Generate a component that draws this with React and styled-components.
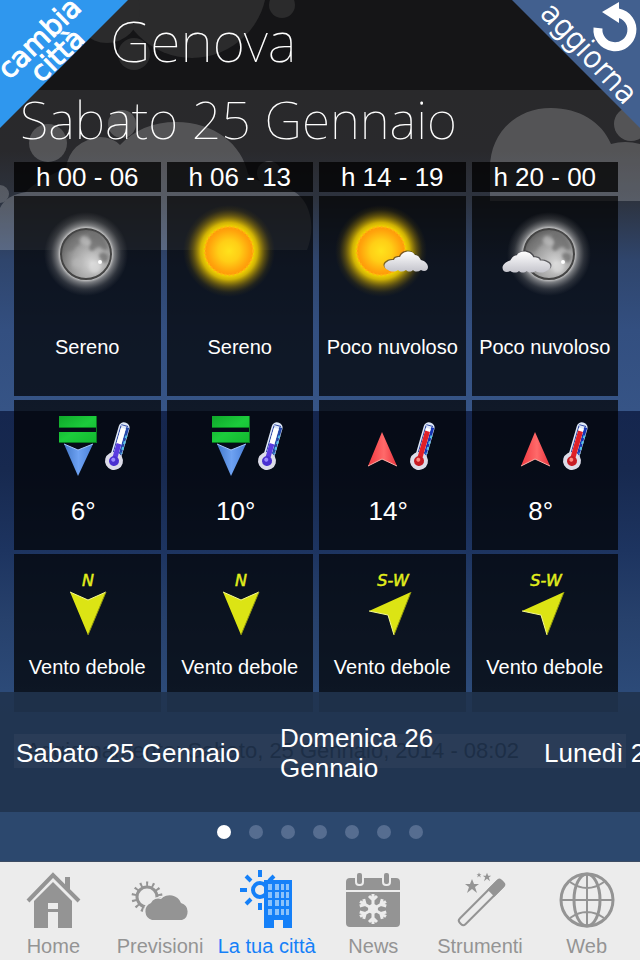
import React from 'react';
import styled, { createGlobalStyle } from 'styled-components';

const GlobalStyle = createGlobalStyle`
  * {
    box-sizing: border-box;
  }
  body {
    margin: 0;
    background: #2c486e;
    font-family: 'Liberation Sans', Arial, sans-serif;
    color: #ffffff;
  }
`;

const Page = styled.div`
  position: relative;
  display: flex;
  flex-direction: column;
  min-height: 100vh;
  overflow: hidden;
  background: linear-gradient(
    #151517 0,
    #151517 90px,
    #29292b 90px,
    #29292c 150px,
    #2d333f 200px,
    #2f456c 260px,
    #334f80 330px,
    #365486 411px,
    #15264e 411px,
    #17294f 470px,
    #1d3460 550px,
    #27416c 620px,
    #2c4a78 690px,
    #2c486e 812px
  );
`;

const Clouds = styled.svg`
  position: absolute;
  top: 0;
  left: 0;
  width: 640px;
  height: 260px;
`;

const Main = styled.main`
  position: relative;
  flex: 1;
`;

const Title = styled.h1`
  margin: 0;
  padding: 0 128px 10px 110px;
  font: 100 56px/80px 'Noto Sans', sans-serif;
`;

const Today = styled.h2`
  margin: 0;
  padding: 0 20px 10px;
  font: 100 52px/58px 'Noto Sans', sans-serif;
`;

const Ribbon = styled.button`
  position: absolute;
  top: 0;
  ${({ $side }) => $side}: 0;
  width: 128px;
  height: 128px;
  padding: 0;
  border: 0;
  background: ${({ $color }) => $color};
  clip-path: ${({ $side }) =>
    $side === 'left'
      ? 'polygon(0 0, 100% 0, 0 100%)'
      : 'polygon(0 0, 100% 0, 100% 100%)'};
  cursor: pointer;
  svg {
    display: block;
  }
`;

const Forecast = styled.table`
  position: relative;
  width: calc(100% - 24px);
  margin: 0 16px 0 8px;
  table-layout: fixed;
  border-collapse: separate;
  border-spacing: 6px 4px;
`;

const Hour = styled.th`
  height: 30px;
  padding: 0;
  background: rgba(0, 0, 0, 0.76);
  font-size: 26px;
  font-weight: normal;
  line-height: 30px;
`;

const Cell = styled.td`
  height: ${({ $height }) => $height}px;
  padding: 0;
  background: rgba(0, 0, 0, 0.7);
  text-align: center;
  vertical-align: top;
  font-size: 20px;
  line-height: 24px;
  white-space: nowrap;
  svg {
    display: block;
    margin: 0 auto;
  }
`;

const Degrees = styled.div`
  padding-right: 8px;
  font-size: 26px;
  line-height: 30px;
`;

const Updated = styled.p`
  position: relative;
  margin: 18px 14px 0;
  padding: 0 12px;
  background: rgba(255, 255, 255, 0.4);
  color: #000000;
  font-size: 22px;
  line-height: 34px;
`;

const Days = styled.div`
  position: absolute;
  right: 0;
  bottom: 0;
  left: 0;
  display: flex;
  height: 120px;
  padding: 2px 0 0 16px;
  overflow: hidden;
  background: rgba(32, 51, 78, 0.9);
`;

const Day = styled.button`
  flex: 0 0 264px;
  padding: 0 24px 0 0;
  border: 0;
  background: none;
  color: #ffffff;
  font: 26px/30px 'Liberation Sans', Arial, sans-serif;
  text-align: left;
  cursor: pointer;
`;

const Pager = styled.div`
  position: relative;
  display: flex;
  justify-content: center;
  gap: 18px;
  height: 49px;
  padding-top: 13px;
  background: #2c486e;
`;

const Dot = styled.button`
  width: 14px;
  height: 14px;
  padding: 0;
  border: 0;
  border-radius: 50%;
  background: ${({ $active }) => ($active ? '#ffffff' : '#566d90')};
`;

const TabBar = styled.nav`
  position: relative;
  display: flex;
  height: 99px;
  padding-top: 8px;
  border-top: 1px solid #3d4c63;
  background: #ececec;
`;

const Tab = styled.a`
  flex: 1 1 0;
  display: flex;
  flex-direction: column;
  align-items: center;
  gap: 4px;
  color: ${({ $active }) => ($active ? '#1580f8' : '#949494')};
  font-size: 20px;
  line-height: 24px;
  white-space: nowrap;
  text-decoration: none;
`;

const Defs = () => (
  <svg width="0" height="0" style={{ position: 'absolute' }} aria-hidden="true">
    <defs>
      <radialGradient id="sunGlow">
        <stop offset="0.5" stopColor="#ffe000" />
        <stop offset="0.62" stopColor="#f0cc00" stopOpacity="0.85" />
        <stop offset="0.78" stopColor="#c09c00" stopOpacity="0.42" />
        <stop offset="0.9" stopColor="#a08000" stopOpacity="0.12" />
        <stop offset="1" stopColor="#806800" stopOpacity="0" />
      </radialGradient>
      <radialGradient id="sunDisc">
        <stop offset="0" stopColor="#ffe21c" />
        <stop offset="0.45" stopColor="#ffce16" />
        <stop offset="0.85" stopColor="#ffa40c" />
        <stop offset="1" stopColor="#ff980a" />
      </radialGradient>
      <radialGradient id="moonGlow">
        <stop offset="0.6" stopColor="#dcdcdc" />
        <stop offset="0.68" stopColor="#b4b4b4" stopOpacity="0.65" />
        <stop offset="0.84" stopColor="#888888" stopOpacity="0.25" />
        <stop offset="1" stopColor="#777777" stopOpacity="0" />
      </radialGradient>
      <radialGradient id="moonDisc" cx="0.62" cy="0.68" r="0.72">
        <stop offset="0" stopColor="#d6d6d6" />
        <stop offset="0.55" stopColor="#a0a0a0" />
        <stop offset="1" stopColor="#5a5a5a" />
      </radialGradient>
      <linearGradient id="cloudFill" x1="0" y1="0" x2="0" y2="1">
        <stop offset="0" stopColor="#ffffff" />
        <stop offset="1" stopColor="#c4c4cc" />
      </linearGradient>
      <linearGradient id="green" x1="0" y1="0" x2="1" y2="1">
        <stop offset="0" stopColor="#0fa82a" />
        <stop offset="0.5" stopColor="#1ccc3c" />
        <stop offset="1" stopColor="#12b62e" />
      </linearGradient>
      <linearGradient id="blue" x1="0" y1="0" x2="1" y2="0">
        <stop offset="0" stopColor="#4277c8" />
        <stop offset="0.5" stopColor="#6ea2f2" />
        <stop offset="1" stopColor="#4a80d8" />
      </linearGradient>
      <linearGradient id="red" x1="0" y1="0" x2="1" y2="0">
        <stop offset="0" stopColor="#f0383f" />
        <stop offset="0.55" stopColor="#ff6a6a" />
        <stop offset="1" stopColor="#e8323c" />
      </linearGradient>
      <filter id="soft" x="-20%" y="-20%" width="140%" height="140%">
        <feGaussianBlur stdDeviation="0.7" />
      </filter>
      <filter id="mottle" x="-20%" y="-20%" width="140%" height="140%">
        <feGaussianBlur stdDeviation="1.5" />
      </filter>
    </defs>
  </svg>
);

const Sun = ({ x, y }) => (
  <g transform={`translate(${x} ${y})`}>
    <circle r="46" fill="url(#sunGlow)" />
    <circle r="24" fill="url(#sunDisc)" />
    <circle r="24" fill="none" stroke="#ffb010" strokeWidth="2" strokeDasharray="2 2" />
  </g>
);

const Moon = ({ x, y }) => (
  <g transform={`translate(${x} ${y})`}>
    <circle r="42" fill="url(#moonGlow)" />
    <circle r="25" fill="url(#moonDisc)" stroke="#444444" strokeWidth="2" />
    <g filter="url(#mottle)">
      <path d="M4-21c6-2 12 2 15 8s4 8 1 9-5-4-8-3-5 6-8 3 2-6 1-9-4-5-1-8z" fill="#6c6c6c" opacity="0.75" />
      <path d="M15-1c5-1 8 2 7 6s-4 5-6 2-5-6-1-8z" fill="#686868" opacity="0.7" />
      <path d="M-17-12c4-4 9-4 11-1s-4 4-5 7-7 4-9 2 0-5 3-8z" fill="#707070" opacity="0.5" />
      <path d="M-3-18c4 0 9 5 7 8s-7 1-9-1 0-7 2-7z" fill="#c4c4c4" opacity="0.6" />
      <circle cx="9" cy="13" r="6" fill="#e0e0e0" opacity="0.6" />
      <circle cx="-9" cy="9" r="5" fill="#bcbcbc" opacity="0.5" />
    </g>
    <circle cx="14" cy="8" r="2" fill="#ffffff" filter="url(#soft)" />
  </g>
);

const cloudPath =
  'M5 20C1 19 0 14 4 12c2-2 5-2 7-2 1-3 4-3 6-3 2-6 12-8 15-2 4 0 5 4 6 5 4 1 7 4 7 7 0 4-4 5-7 3-3 2-6 2-8 0-2 2-5 2-7 0-3 2-6 2-8 0-3 2-7 2-10 0z';

const WeatherIcon = ({ night, cloudy }) => (
  <svg width="146" height="139" viewBox="0 0 146 139">
    {night ? <Moon x={cloudy ? 77 : 72} y={58} /> : <Sun x={62} y={55} />}
    {cloudy && (
      <g transform={night ? 'translate(80 54) scale(-1.1 1.05)' : 'translate(64 54)'}>
        <path d={cloudPath} fill="#24242a" opacity="0.6" transform="translate(-1 -1)" filter="url(#soft)" />
        <path d={cloudPath} fill="url(#cloudFill)" filter="url(#soft)" />
      </g>
    )}
  </svg>
);

const TemperatureIcon = ({ cold }) => (
  <svg width="146" height="96" viewBox="0 0 146 96">
    {cold ? (
      <g>
        <path d="M45 16h38v12H45zM45 32h38v11H45z" fill="url(#green)" />
        <path d="M45 27.500h38M45 42.500h38M82.500 16v27" stroke="#0a7a20" fill="none" />
        <path d="M50 44l14 6 15-6-15 32z" fill="url(#blue)" />
        <path d="M50 44l14 6 15-6" fill="none" stroke="#a6c6fa" />
      </g>
    ) : (
      <g>
        <path d="M63 32l15 34-15-7-14 7z" fill="url(#red)" />
        <path d="M49 66l14-7 15 7" fill="none" stroke="#ffb0a8" />
      </g>
    )}
    <g transform="translate(100 61) rotate(16)">
      <rect x="-5" y="-40" width="11" height="40" rx="5" fill="#dfe9f8" />
      <path d="M4-36v29" stroke={cold ? '#2448a8' : '#1534b4'} strokeWidth="3" />
      <path d="M5-28v19" stroke="#58c4e8" strokeWidth="2" strokeDasharray="3 3" />
      <path d="M-3-36v30M-3-37h7" fill="none" stroke="#2740a0" strokeWidth="1" />
      <circle r="9" fill="#dcdce8" />
      <path d="M0-34V0" stroke="#ffffff" strokeWidth="5" />
      <path
        d={cold ? 'M0-18V0' : 'M0-31V0'}
        stroke={cold ? '#5a3ce0' : '#e02028'}
        strokeWidth="5"
      />
      <circle r="5" fill={cold ? '#4a30d0' : '#c81c24'} />
      <circle cx="-1" cy="-1" r="2" fill={cold ? '#9a88ff' : '#ff8a80'} />
    </g>
  </svg>
);

const WindIcon = ({ direction }) => (
  <svg width="146" height="101" viewBox="0 0 146 101">
    <text
      x="74"
      y="32"
      textAnchor="middle"
      fill="#e2ee1c"
      stroke="#e2ee1c"
      strokeWidth="0.5"
      fontFamily="'DejaVu Sans', sans-serif"
      fontStyle="italic"
      fontSize="16"
    >
      {direction}
    </text>
    {direction === 'N' ? (
      <g>
        <path d="M56 38l18 8 18-8-18 43z" fill="#dce414" />
        <path d="M56 38l18 8 18-8" fill="none" stroke="#f6fa90" />
        <path d="M92 38L74 81" stroke="#8e9410" />
      </g>
    ) : (
      <g>
        <path d="M92 38L75 81l-6-20-19-4z" fill="#dce414" />
        <path d="M75 81l-6-20-19-4" fill="none" stroke="#f6fa90" />
        <path d="M92 38L75 81" stroke="#8e9410" />
      </g>
    )}
  </svg>
);

const HomeIcon = () => (
  <svg width="60" height="60" fill="currentColor">
    <path d="M5 31L30 5l26 26" fill="none" stroke="currentColor" strokeWidth="4" />
    <path d="M42 7h5v14l-5-5z" />
    <path d="M30 12l19 19v27H35V42H25v16H11V31z" />
    <path d="M25 33h10v6H25z" fill="#ececec" />
  </svg>
);

const ForecastIcon = () => (
  <svg width="60" height="60" fill="currentColor">
    <circle cx="17" cy="27" r="10" fill="none" stroke="currentColor" strokeWidth="3" />
    <circle cx="17" cy="27" r="13" fill="none" stroke="currentColor" strokeWidth="5" strokeDasharray="2 4" />
    <path
      d="M22 50a9 9 0 0 1-1-17 8 8 0 0 1 10-4 12 12 0 0 1 20 4 9 9 0 0 1 1 17z"
      stroke="#ececec"
      strokeWidth="3"
      paintOrder="stroke"
    />
  </svg>
);

const CityIcon = () => (
  <svg width="60" height="60" fill="currentColor">
    <circle cx="23" cy="20" r="7" fill="none" stroke="currentColor" strokeWidth="4" />
    <path
      d="M23 0v7M3 20h7M9 6l5 5M37 6l-5 5M9 34l5-5M23 33v7"
      stroke="currentColor"
      strokeWidth="4"
    />
    <path d="M27 10h28v48h-9v-8h-9v8H27z" />
    {[14, 22, 30, 39].map((y) => (
      <path key={y} d={`M31 ${y}h4v6h-4zM38 ${y}h4v6h-4zM44 ${y}h3v6h-3zM49 ${y}h3v6h-3z`} fill="#8cc2fa" />
    ))}
  </svg>
);

const NewsIcon = () => (
  <svg width="60" height="60" fill="currentColor">
    <path d="M7 8h46q4 0 4 4v8H3v-8q0-4 4-4zM3 22h54v31q0 4-4 4H7q-4 0-4-4z" />
    <g fill="currentColor" stroke="#ececec" strokeWidth="2">
      <rect x="13" y="2" width="7" height="13" rx="3" />
      <rect x="40" y="2" width="7" height="13" rx="3" />
    </g>
    <path d="M15 4h3v9h-3zM42 4h3v9h-3z" />
    <circle cx="30" cy="39" r="5" fill="#ececec" />
    <g fill="none" stroke="#ececec" strokeWidth="3">
      {[0, 60, 120, 180, 240, 300].map((a) => (
        <path key={a} d="M30 39V24M26 26l4 4 4-4" transform={`rotate(${a} 30 39)`} />
      ))}
    </g>
  </svg>
);

const star = 'M0-7l2 5h5l-4 3 2 6-5-4-5 4 2-6-4-3h5z';

const ToolsIcon = () => (
  <svg width="60" height="60" fill="currentColor">
    <g transform="rotate(-45 31 33)">
      <rect x="2" y="29" width="59" height="8" rx="3" fill="none" stroke="currentColor" strokeWidth="2" />
      <path d="M45 28h14q3 0 3 3v4q0 3-3 3H45z" />
    </g>
    <path d={star} transform="translate(22 16)" />
    <path d={star} transform="translate(37 7) scale(0.6)" />
    <path d={star} transform="translate(29 5) scale(0.35)" />
  </svg>
);

const WebIcon = () => (
  <svg width="60" height="60" fill="none" stroke="currentColor" strokeWidth="3">
    <circle cx="30" cy="30" r="26" />
    <ellipse cx="30" cy="30" rx="13" ry="26" />
    <path d="M30 4v52M4 30h52M13 12q17 12 34 0M13 48q17-12 34 0" strokeWidth="2" />
  </svg>
);

const hours = [
  { time: 'h 00 - 06', sky: 'Sereno', night: true, degrees: '6°', cold: true, wind: 'N' },
  { time: 'h 06 - 13', sky: 'Sereno', degrees: '10°', cold: true, wind: 'N' },
  { time: 'h 14 - 19', sky: 'Poco nuvoloso', cloudy: true, degrees: '14°', wind: 'S-W' },
  { time: 'h 20 - 00', sky: 'Poco nuvoloso', night: true, cloudy: true, degrees: '8°', wind: 'S-W' },
];

const days = ['Sabato 25 Gennaio', 'Domenica 26 Gennaio', 'Lunedì 27 Gennaio'];

const tabs = [
  { label: 'Home', Icon: HomeIcon },
  { label: 'Previsioni', Icon: ForecastIcon },
  { label: 'La tua città', Icon: CityIcon, active: true },
  { label: 'News', Icon: NewsIcon },
  { label: 'Strumenti', Icon: ToolsIcon },
  { label: 'Web', Icon: WebIcon },
];

export default () => (
  <Page>
    <GlobalStyle />
    <Defs />
    <Clouds viewBox="0 0 640 260" aria-hidden="true">
      <g fill="#2b2b2c">
        <circle cx="192" cy="-17" r="75" />
        <circle cx="107" cy="10" r="33" />
        <circle cx="134" cy="54" r="16" />
        <circle cx="282" cy="5" r="13" />
      </g>
      <g fill="#ffffff" opacity="0.2">
        <circle cx="48" cy="143" r="19" />
        <circle cx="122" cy="124" r="14" />
        <circle cx="0" cy="194" r="9" />
        <circle cx="269" cy="173" r="12" />
        <path d="M0 250v-42q6-13 26-16 8-10 40-24 4-27 34-31 12 0 20 8 22-23 56-23c38 0 66 22 72 52 6 8 20 8 43 16 18 8 26 34 16 60z" />
        <circle cx="631" cy="124" r="17" />
        <path d="M490 201v-33c0-34 25-60 61-60 28 0 51 14 60 36q14-4 29 0v57z" />
      </g>
    </Clouds>
    <Main>
      <Title>Genova</Title>
      <Today>Sabato 25 Gennaio</Today>
      <Forecast>
        <thead>
          <tr>
            {hours.map(({ time }) => (
              <Hour key={time} scope="col">
                {time}
              </Hour>
            ))}
          </tr>
        </thead>
        <tbody>
          <tr>
            {hours.map(({ time, sky, night, cloudy }) => (
              <Cell key={time} $height={200}>
                <WeatherIcon night={night} cloudy={cloudy} />
                {sky}
              </Cell>
            ))}
          </tr>
          <tr>
            {hours.map(({ time, degrees, cold }) => (
              <Cell key={time} $height={150}>
                <TemperatureIcon cold={cold} />
                <Degrees>{degrees}</Degrees>
              </Cell>
            ))}
          </tr>
          <tr>
            {hours.map(({ time, wind }) => (
              <Cell key={time} $height={158}>
                <WindIcon direction={wind} />
                Vento debole
              </Cell>
            ))}
          </tr>
        </tbody>
      </Forecast>
      <Updated>Aggiornamento: Sabato, 25 Gennaio, 2014 - 08:02</Updated>
      <Days>
        {days.map((day) => (
          <Day key={day} type="button">
            {day}
          </Day>
        ))}
      </Days>
      <Ribbon type="button" $side="left" $color="#2f97ee">
        <svg
          width="128"
          height="128"
          fill="#ffffff"
          stroke="#ffffff"
          fontFamily="'DejaVu Sans', sans-serif"
          fontSize="28"
          textAnchor="middle"
        >
          <text transform="translate(46 45) rotate(-44)">cambia</text>
          <text transform="translate(64 62) rotate(-44)">città</text>
        </svg>
      </Ribbon>
      <Ribbon type="button" $side="right" $color="#42608f">
        <svg width="128" height="128" fill="#ffffff">
          <text
            transform="translate(70 60) rotate(47)"
            fontFamily="'DejaVu Sans', sans-serif"
            fontSize="29"
            fontWeight="200"
            stroke="#ffffff"
            textAnchor="middle"
          >
            aggiorna
          </text>
          <path d="M86 28a17 17 0 1 0 20-15" fill="none" stroke="#ffffff" strokeWidth="9" />
          <path d="M90 12L107 2v21z" />
        </svg>
      </Ribbon>
    </Main>
    <Pager>
      {[1, 2, 3, 4, 5, 6, 7].map((n) => (
        <Dot key={n} type="button" aria-label={`Giorno ${n}`} $active={n === 1} />
      ))}
    </Pager>
    <TabBar>
      {tabs.map(({ label, Icon, active }) => (
        <Tab key={label} href="#" $active={active}>
          <Icon />
          {label}
        </Tab>
      ))}
    </TabBar>
  </Page>
);
